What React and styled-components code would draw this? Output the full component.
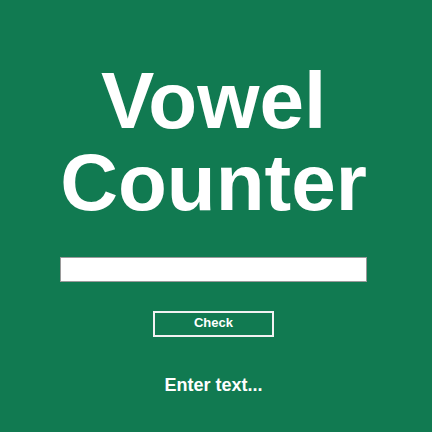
import React, { useState } from 'react';
import styled, { createGlobalStyle } from 'styled-components';

const GlobalStyle = createGlobalStyle`
  html, body {
    margin: 0;
    padding: 0;
    background: #117a51;
  }
  body {
    font-family: "Liberation Sans", Arial, sans-serif;
  }
`;

const Page = styled.div`
  min-height: 100vh;
  box-sizing: border-box;
  display: flex;
  flex-direction: column;
  align-items: center;
  padding: 60px 5px 0 0;
  color: #fff;
`;

const Title = styled.h1`
  margin: 0;
  font-size: 80px;
  line-height: 82px;
  font-weight: 700;
  text-align: center;
`;

const TextInput = styled.input`
  margin-top: 33px;
  width: 307px;
  height: 25px;
  box-sizing: border-box;
  border: 1px solid #9a9a9a;
  background: #fff;
  padding: 0 4px;
  font-family: inherit;
  outline: none;
`;

const CheckButton = styled.button`
  margin-top: 29px;
  width: 121px;
  height: 26px;
  box-sizing: border-box;
  border: 2px solid #f2f2f2;
  background: transparent;
  padding: 0 0 3px;
  color: #fff;
  font-family: "Liberation Sans", Arial, sans-serif;
  font-size: 13px;
  font-weight: 700;
  cursor: pointer;
`;

const Result = styled.p`
  margin: 38px 0 0;
  font-size: 18px;
  font-weight: 700;
`;

const countVowels = (str) => (str.match(/[aeiou]/gi) || []).length;

export default function App() {
  const [text, setText] = useState('');
  const [result, setResult] = useState('Enter text...');

  const handleCheck = () => {
    if (!text.trim()) {
      setResult('Enter text...');
      return;
    }
    setResult(`${countVowels(text)} vowels found`);
  };

  return (
    <>
      <GlobalStyle />
      <Page>
        <Title>Vowel<br />Counter</Title>
        <TextInput value={text} onChange={e => setText(e.target.value)} />
        <CheckButton onClick={handleCheck}>Check</CheckButton>
        <Result>{result}</Result>
      </Page>
    </>
  );
}
